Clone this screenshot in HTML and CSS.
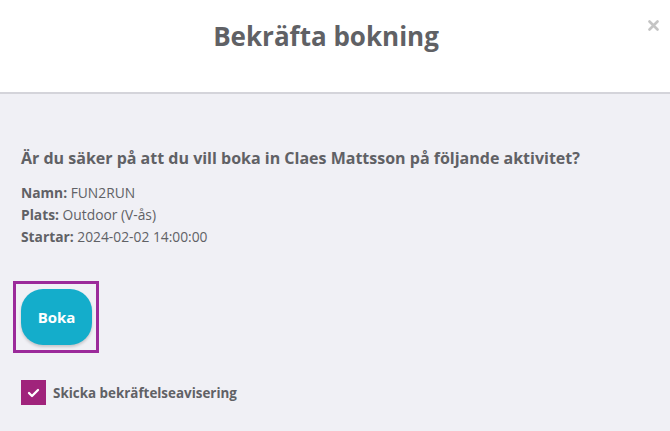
FILE: index.html
```html
<!DOCTYPE html>
<html lang="sv">
<head>
<meta charset="utf-8">
<link rel="stylesheet" href="styles.css">
</head>
<body>
<div class="modal">
  <header class="modal-header">
    <h1 class="title">Bekräfta bokning</h1>
    <button class="close" aria-label="Stäng">
      <svg width="11" height="11" viewBox="0 0 11 11"><path d="M1.5 1.5l8 8M9.5 1.5l-8 8" stroke="#c4c4c4" stroke-width="2.6" stroke-linecap="round"/></svg>
    </button>
  </header>
  <main class="modal-body">
    <p class="question">Är du säker på att du vill boka in Claes Mattsson på följande aktivitet?</p>
    <ul class="details">
      <li><b>Namn:</b> FUN2RUN</li>
      <li><b>Plats:</b> Outdoor (V-ås)</li>
      <li><b>Startar:</b> 2024-02-02 14:00:00</li>
    </ul>
    <div class="focus-ring">
      <button class="book">Boka</button>
    </div>
    <label class="notify">
      <span class="checkbox">
        <svg width="13" height="10" viewBox="0 0 13 10"><path d="M2 5l3 3L11 2" fill="none" stroke="#fff" stroke-width="2.3" stroke-linecap="round" stroke-linejoin="round"/></svg>
      </span>
      <span class="notify-text">Skicka bekräftelseavisering</span>
    </label>
  </main>
</div>
</body>
</html>
```
FILE: styles.css
```css
* { box-sizing: border-box; }
html, body { margin: 0; padding: 0; }
body {
  width: 670px;
  height: 431px;
  overflow: hidden;
  background: #f0f0f5;
  font-family: "Open Sans", "DejaVu Sans", sans-serif;
  color: #5f6064;
}
.modal { display: flex; flex-direction: column; height: 431px; }
.modal-header {
  position: relative;
  height: 94px;
  background: #ffffff;
  border-bottom: 2px solid #d4d4da;
  display: flex;
  justify-content: center;
  padding-top: 16px;
}
.title {
  margin: 0 0 0 -18px;
  font-size: 26px;
  font-weight: 700;
  color: #606165;
  line-height: 40px;
}
.close {
  position: absolute;
  top: 20px;
  right: 11px;
  border: 0;
  background: none;
  padding: 0;
  width: 11px;
  height: 11px;
  display: flex;
}
.modal-body { padding: 52px 21px 0; }
.question {
  margin: 0;
  font-size: 16px;
  font-weight: 700;
  line-height: 24px;
  color: #606165;
}
.details {
  list-style: none;
  margin: 12px 0 0;
  padding: 0;
  font-size: 13.8px;
  line-height: 22px;
  color: #606165;
}
.details b { font-weight: 700; }
.focus-ring {
  margin: 33px 0 0 -8px;
  width: 86px;
  height: 72px;
  border: 3px solid #9b2a9a;
  padding: 5px;
}
.book {
  width: 71px;
  height: 56px;
  border: 0;
  border-radius: 22px;
  background: #14adcb;
  color: #ffffff;
  font-family: inherit;
  font-size: 15px;
  font-weight: 700;
  box-shadow: 0 2px 3px rgba(0,0,0,0.18);
}
.notify {
  display: flex;
  align-items: center;
  gap: 7px;
  margin-top: 27px;
}
.checkbox {
  width: 25px;
  height: 25px;
  background: #a0237b;
  display: flex;
  align-items: center;
  justify-content: center;
}
.notify-text {
  font-size: 13.4px;
  font-weight: 700;
  color: #606165;
}
```
